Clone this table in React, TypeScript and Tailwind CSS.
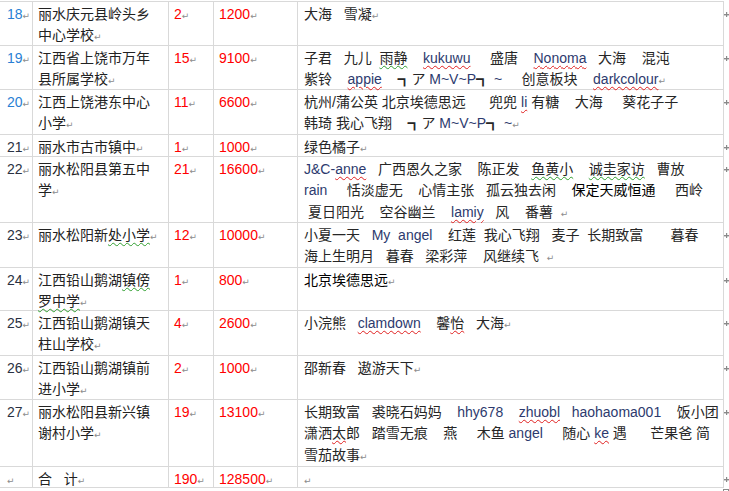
import React from "react";

const P = () => (
  <span className="text-[#8c8c8c] text-[9px] font-['DejaVu_Sans']">↵</span>
);

const L = ({ children, red }: { children: React.ReactNode; red?: boolean }) => (
  <span
    className={
      red
        ? "text-[#2d3a6e] underline decoration-wavy decoration-1 decoration-[#e02020] underline-offset-[2px]"
        : "text-[#2d3a6e]"
    }
  >
    {children}
  </span>
);

const RW = ({ children }: { children: React.ReactNode }) => (
  <span className="underline decoration-wavy decoration-1 decoration-[#e02020] underline-offset-[2px]">
    {children}
  </span>
);

const GW = ({ children }: { children: React.ReactNode }) => (
  <span className="underline decoration-wavy decoration-1 decoration-[#2f9e2f] underline-offset-[2px]">
    {children}
  </span>
);

const B = ({ children }: { children: React.ReactNode }) => (
  <span className="text-black">{children}</span>
);

const Marker = () => (
  <div className="w-[5px] pt-[10px] flex justify-end">
    <svg width="5" height="5" viewBox="0 0 5 5">
      <rect x="0" y="2" width="5" height="1.4" fill="#8a8a8a" />
      <rect x="2" y="0" width="1.2" height="5" fill="#8a8a8a" />
    </svg>
  </div>
);

type RowProps = {
  h: string;
  num: React.ReactNode;
  numCls: string;
  name: React.ReactNode;
  cnt: string;
  amt: string;
  names: React.ReactNode;
};

const Row = ({ h, num, numCls, name, cnt, amt, names }: RowProps) => (
  <div className="flex">
    <div className={`flex w-[724px] border-b border-[#d9d9d9] ${h}`}>
      <div className={`w-[33px] border-r border-[#d9d9d9] pl-[7px] pt-[1.5px] ${numCls}`}>
        {num}
        <P />
      </div>
      <div className="w-[136px] border-r border-[#d9d9d9] pl-[5px] pt-[1.5px] text-[#222]">
        {name}
      </div>
      <div className="w-[45px] border-r border-[#d9d9d9] pl-[5px] pt-[1.5px] text-[#ff0000]">
        {cnt}
        <P />
      </div>
      <div className="w-[84px] border-r border-[#d9d9d9] pl-[5px] pt-[1.5px] text-[#ff0000]">
        {amt}
        <P />
      </div>
      <div className="w-[426px] border-r border-[#d9d9d9] pl-[6px] pt-[1.5px] text-[#262626] whitespace-pre">
        {names}
      </div>
    </div>
    <Marker />
  </div>
);

const BLUE = "text-[#2a7fd4]";
const DARK = "text-[#2a3142]";

export default function App() {
  return (
    <div className="w-[729px] h-[491px] overflow-hidden bg-white font-['Liberation_Sans','Noto_Sans_CJK_SC',sans-serif] text-[14px] leading-[21.5px]">
      <div className="mt-[1px] w-[724px] h-px bg-[#d9d9d9]" />
      <Row
        h="h-[44px]"
        num="18"
        numCls={BLUE}
        name={<><div>丽水庆元县岭头乡</div><div>中心学校<P /></div></>}
        cnt="2"
        amt="1200"
        names={<div>{"大海   雪凝"}<P /></div>}
      />
      <Row
        h="h-[44px]"
        num="19"
        numCls={BLUE}
        name={<><div>江西省上饶市万年</div><div>县所属学校<P /></div></>}
        cnt="15"
        amt="9100"
        names={
          <>
            <div>
              {"子君   九儿  "}<GW>雨静</GW>{"    "}<L red>kukuwu</L>{"     盛唐    "}<L red>Nonoma</L>{"   大海    混沌"}
            </div>
            <div>
              {"紫铃    "}<L red>appie</L>{"    ┓ア "}<L>M~V~P</L>{"┓ "}<L>~</L>{"     创意板块    "}<L red>darkcolour</L><P />
            </div>
          </>
        }
      />
      <Row
        h="h-[45px]"
        num="20"
        numCls={BLUE}
        name={<><div>江西上饶港东中心</div><div>小学<P /></div></>}
        cnt="11"
        amt="6600"
        names={
          <>
            <div>
              {"杭州/蒲公英 北京埃德思远      兜兜 "}<L red>li</L>{" 有糖    大海     葵花子子"}
            </div>
            <div>
              {"韩琦 我心飞翔    ┓ア "}<L>M~V~P</L>{"┓ "}<L>~</L><P />
            </div>
          </>
        }
      />
      <Row
        h="h-[22px]"
        num="21"
        numCls={DARK}
        name={<div>丽水市古市镇中<P /></div>}
        cnt="1"
        amt="1000"
        names={<div>绿色橘子<P /></div>}
      />
      <Row
        h="h-[66px]"
        num="22"
        numCls={DARK}
        name={<><div>丽水松阳县第五中</div><div>学<P /></div></>}
        cnt="21"
        amt="16600"
        names={
          <>
            <div>
              <L>J&amp;C-<RW>anne</RW></L>{"   广西恩久之家    陈正发   "}<GW>鱼黄小</GW>{"    "}<GW>诚圭家访</GW>{"   曹放"}
            </div>
            <div>
              <L>rain</L>{"     恬淡虚无    心情主张   孤云独去闲    "}<B>保定天威恒通</B>{"     西岭"}
            </div>
            <div>
              {" 夏日阳光    空谷幽兰    "}<L red>lamiy</L>{"   风    番薯  "}<P />
            </div>
          </>
        }
      />
      <Row
        h="h-[45px]"
        num="23"
        numCls={DARK}
        name={<div>丽水松阳新<GW>处小学</GW><P /></div>}
        cnt="12"
        amt="10000"
        names={
          <>
            <div>
              {"小夏一天   "}<L>{"My  angel"}</L>{"    红莲  我心飞翔   麦子  长期致富       暮春"}
            </div>
            <div>
              {"海上生明月   暮春   梁彩萍    风继续飞  "}<P />
            </div>
          </>
        }
      />
      <Row
        h="h-[43px]"
        num="24"
        numCls={DARK}
        name={<><div>江西铅山鹅湖<GW>镇傍</GW></div><div><GW>罗中学</GW><P /></div></>}
        cnt="1"
        amt="800"
        names={<div><B>北京埃德思远</B><P /></div>}
      />
      <Row
        h="h-[45px]"
        num="25"
        numCls={DARK}
        name={<><div>江西铅山鹅湖镇天</div><div>柱山学校<P /></div></>}
        cnt="4"
        amt="2600"
        names={
          <div>
            {"小浣熊   "}<L red>clamdown</L>{"    馨"}<RW>怡</RW>{"   大海"}<P />
          </div>
        }
      />
      <Row
        h="h-[44px]"
        num="26"
        numCls={DARK}
        name={<><div>江西铅山鹅湖镇前</div><div>进小学<P /></div></>}
        cnt="2"
        amt="1000"
        names={<div>{"邵新春   遨游天下"}<P /></div>}
      />
      <Row
        h="h-[67px]"
        num="27"
        numCls={DARK}
        name={<><div>丽水松阳县新兴镇</div><div>谢村小学<P /></div></>}
        cnt="19"
        amt="13100"
        names={
          <>
            <div>
              {"长期致富   裘晓石妈妈    "}<L>hhy678</L>{"    "}<L red>zhuobl</L>{"   "}<L>haohaoma001</L>{"    饭小团"}
            </div>
            <div>
              {"潇洒"}<RW>太</RW>{"郎   踏雪无痕    燕     木鱼 "}<L>angel</L>{"     随心 "}<L red>ke</L>{" 遇      芒果爸 简"}
            </div>
            <div>
              雪茄故事<P />
            </div>
          </>
        }
      />
      <Row
        h="h-[21px]"
        num=""
        numCls={DARK}
        name={<div className="whitespace-pre">{"合   计"}<P /></div>}
        cnt="190"
        amt="128500"
        names={<div><P /></div>}
      />
      <div className="ml-[723px] mt-[1px] w-[6px] h-[6px] border border-[#8a8a8a]" />
    </div>
  );
}
